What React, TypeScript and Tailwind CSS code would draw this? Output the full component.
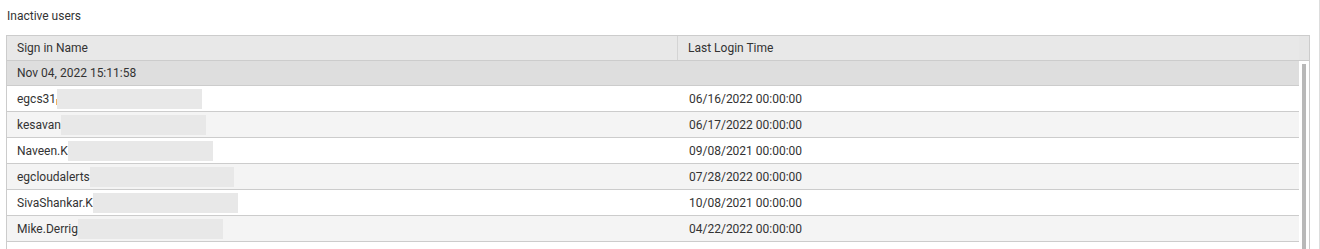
import React from "react";

// ============================================================================
// DATA
// ============================================================================

interface InactiveUser {
  name: string;
  maskWidth: number;
  lastLogin: string;
  sliver?: boolean;
}

const USERS: InactiveUser[] = [
  { name: "egcs31", maskWidth: 145, lastLogin: "06/16/2022 00:00:00", sliver: true },
  { name: "kesavan", maskWidth: 145, lastLogin: "06/17/2022 00:00:00" },
  { name: "Naveen.K", maskWidth: 145, lastLogin: "09/08/2021 00:00:00" },
  { name: "egcloudalerts", maskWidth: 144, lastLogin: "07/28/2022 00:00:00" },
  { name: "SivaShankar.K", maskWidth: 145, lastLogin: "10/08/2021 00:00:00" },
  { name: "Mike.Derrig", maskWidth: 145, lastLogin: "04/22/2022 00:00:00" },
  { name: "", maskWidth: 0, lastLogin: "" },
];

// ============================================================================
// ROW
// ============================================================================

function UserRow({ user, index }: { user: InactiveUser; index: number }) {
  const bg = index % 2 === 0 ? "bg-white" : "bg-[#f4f4f4]";
  return (
    <div className={`flex h-[26px] shrink-0 border-b border-[#cccccc] ${bg}`}>
      <div className="flex w-[671px] items-center pl-[10px]">
        <span>{user.name}</span>
        {user.sliver && <span className="mt-[6px] h-[6px] w-[1px] bg-[#f0b060]" />}
        {user.maskWidth > 0 && (
          <span
            className="h-[20px] bg-[#e8e8e8]"
            style={{ width: user.maskWidth }}
          />
        )}
      </div>
      <div className="flex flex-1 items-center pl-[11px]">{user.lastLogin}</div>
    </div>
  );
}

// ============================================================================
// APP
// ============================================================================

export default function App() {
  return (
    <div
      className="h-[249px] w-[1320px] overflow-hidden border-r border-[#dddddd] bg-white text-[12px] text-[#333333]"
      style={{ fontFamily: "Roboto, 'Liberation Sans', sans-serif" }}
    >
      <div className="h-[35px] pl-[7px] pt-[8px] leading-[16px]">Inactive users</div>

      <div className="ml-[6px] flex h-[214px] w-[1304px] flex-col border-l border-r border-t border-[#cccccc]">
        {/* header */}
        <div className="flex h-[25px] shrink-0 border-b border-[#cccccc] bg-[#e8e8e8]">
          <div className="flex w-[671px] items-center border-r border-[#d4d4d4] pl-[10px]">
            Sign in Name
          </div>
          <div className="flex flex-1 items-center pl-[10px]">Last Login Time</div>
          <div className="w-[10px] bg-[#e6e6e6]" />
        </div>

        {/* body */}
        <div className="flex min-h-0 flex-1">
          <div className="flex min-w-0 flex-1 flex-col overflow-hidden">
            <div className="flex h-[25px] shrink-0 items-center border-b border-[#cccccc] bg-[#dedede] pl-[10px]">
              Nov 04, 2022 15:11:58
            </div>
            {USERS.map((u, i) => (
              <UserRow key={i} user={u} index={i} />
            ))}
          </div>
          <div className="w-[10px] bg-white pl-[3px] pt-[3px]">
            <div className="h-full w-[4px] bg-[#b8b8b8]" />
          </div>
        </div>
      </div>
    </div>
  );
}
